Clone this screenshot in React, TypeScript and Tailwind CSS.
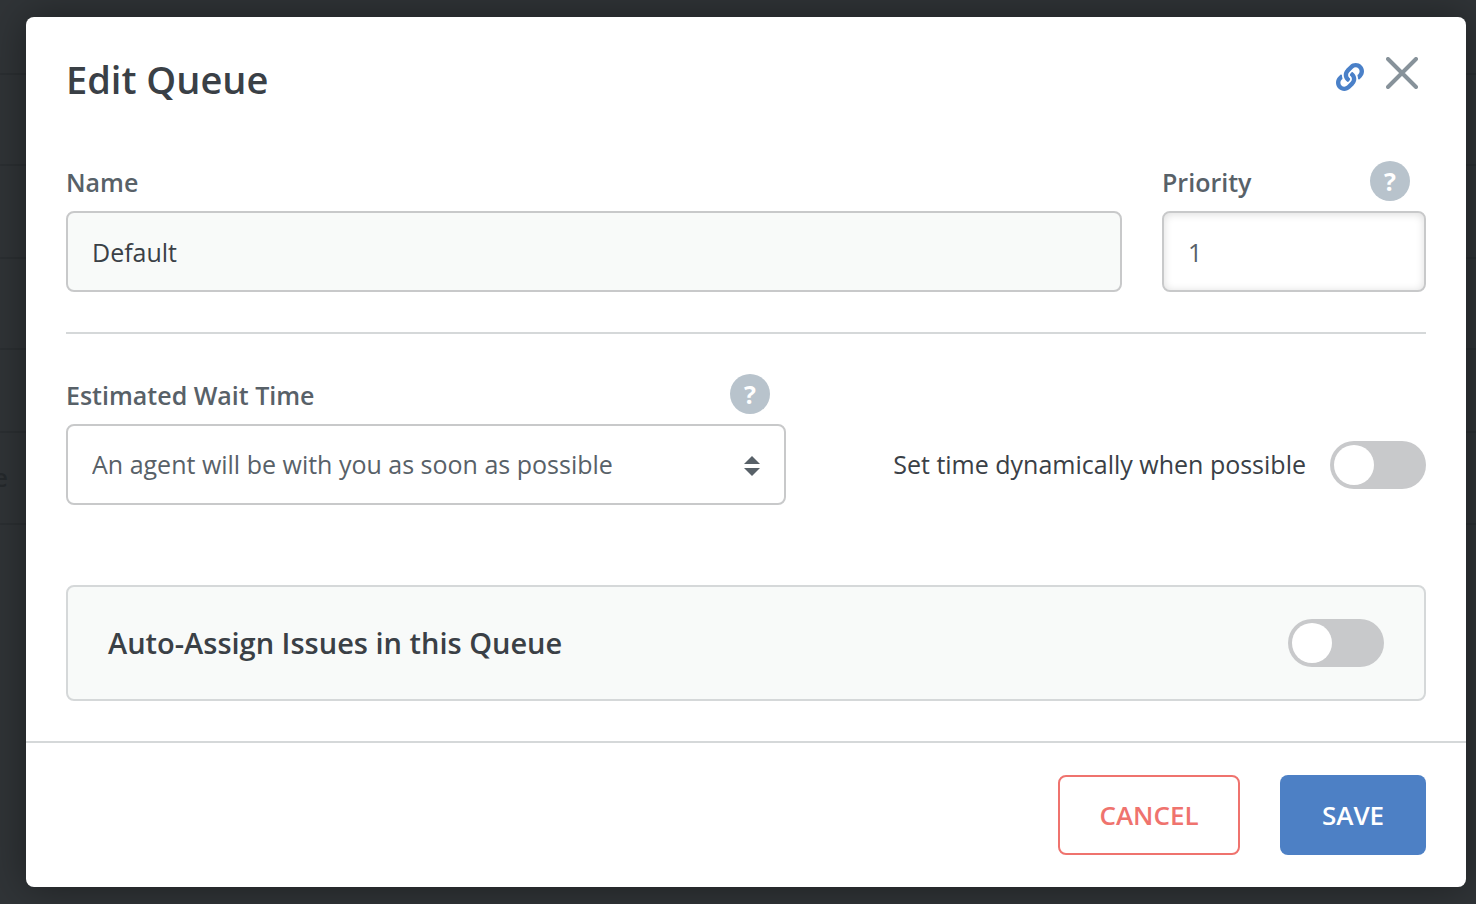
import { useState } from 'react';
import { FaLink } from 'react-icons/fa';

const labelClass = 'pt-1 font-semibold text-[#586168]';
const inputClass = 'w-full h-[81px] rounded-lg border-2 border-[#c8c9ca] px-6 text-[25px] outline-none';

function HelpButton({ label }: { label: string }) {
  return (
    <button
      type="button"
      aria-label={label}
      className="size-10 rounded-full bg-[#b8c3cc] text-white text-[25px] font-bold leading-10 text-center"
    >
      ?
    </button>
  );
}

function Toggle({ id }: { id: string }) {
  const [on, setOn] = useState(false);

  return (
    <input
      id={id}
      type="checkbox"
      checked={on}
      onChange={(e) => setOn(e.target.checked)}
      className="appearance-none shrink-0 w-24 h-12 p-1 rounded-full bg-[#c8c9cb] checked:bg-[#4d80c5] before:block before:size-10 before:rounded-full before:bg-white checked:before:ml-12"
    />
  );
}

// Dimmed queue list that shows around the modal
function Backdrop() {
  return (
    <div aria-hidden="true" className="absolute inset-0 -z-10 overflow-hidden bg-[#303437]">
      <div className="h-[75px] border-b-2 border-[#2b2f32]" />
      <div className="h-[91px] border-b-2 border-[#2b2f32]" />
      <div className="h-[93px] border-b-2 border-[#2b2f32]" />
      <div className="h-[91px] border-b-2 border-[#2b2f32]" />
      <div className="h-[83px] border-b-2 border-[#2b2f32]" />
      <div className="h-[92px] border-b-2 border-[#2b2f32] flex items-center">
        <span className="w-2 flex justify-end text-[25px] font-semibold text-[#25292c]">e</span>
      </div>
    </div>
  );
}

export default function App() {
  const [name, setName] = useState('Default');
  const [priority, setPriority] = useState('1');

  return (
    <div className="relative isolate min-h-screen pt-[17px] pb-4 pl-[26px] pr-[10px] font-['Open_Sans',sans-serif] text-[25px] text-[#3a4046]">
      <Backdrop />

      <form
        role="dialog"
        aria-labelledby="modal-title"
        onSubmit={(e) => e.preventDefault()}
        className="rounded-lg bg-white shadow-[0_0_40px_rgba(0,0,0,0.4)]"
      >
        <div className="p-10">
          <header className="flex items-center justify-between h-11">
            <h1 id="modal-title" className="text-[38px] font-semibold">Edit Queue</h1>
            <div className="flex self-start gap-[22px] pr-2">
              <a href="#queue" aria-label="Copy link" className="pt-[6px] text-[#4a80c8]">
                <FaLink className="size-7" />
              </a>
              <button type="button" aria-label="Close" className="size-8">
                <svg viewBox="0 0 32 32" className="size-8" fill="none" stroke="#87929a" strokeWidth="4" strokeLinecap="round">
                  <path d="M2 2l28 28M30 2L2 30" />
                </svg>
              </button>
            </div>
          </header>

          <div className="flex gap-10 mt-[60px] pb-10 border-b-2 border-[#d5d8d9]">
            <div className="flex-1">
              <div className="flex items-center h-10 mb-[10px]">
                <label htmlFor="name" className={labelClass}>Name</label>
              </div>
              <input
                id="name"
                value={name}
                onChange={(e) => setName(e.target.value)}
                className={`${inputClass} bg-[#f8faf9]`}
              />
            </div>
            <div className="w-[264px]">
              <div className="flex items-center justify-between h-10 mb-[10px] pr-4">
                <label htmlFor="priority" className={labelClass}>Priority</label>
                <HelpButton label="About priority" />
              </div>
              <input
                id="priority"
                value={priority}
                onChange={(e) => setPriority(e.target.value)}
                className={`${inputClass} bg-white text-[#586168] shadow-[inset_0_1px_8px_rgba(0,0,0,0.14)]`}
              />
            </div>
          </div>

          <div className="flex items-end justify-between mt-10">
            <div className="w-[720px]">
              <div className="flex items-center justify-between h-10 mb-[10px] pr-4">
                <label htmlFor="wait" className={labelClass}>Estimated Wait Time</label>
                <HelpButton label="About estimated wait time" />
              </div>
              <div className="relative">
                <select id="wait" className={`${inputClass} appearance-none bg-white text-[#586168]`}>
                  <option>An agent will be with you as soon as possible</option>
                </select>
                <svg viewBox="0 0 16 20" className="absolute right-[26px] top-8 w-4 h-5 pointer-events-none" fill="#586168">
                  <path d="M8 0l8 8H0zM0 12h16l-8 8z" />
                </svg>
              </div>
            </div>
            <div className="flex items-center gap-6 h-[81px]">
              <label htmlFor="dynamic">Set time dynamically when possible</label>
              <Toggle id="dynamic" />
            </div>
          </div>

          <div className="flex items-center justify-between h-[116px] mt-20 px-10 rounded-lg border-2 border-[#d5d8d9] bg-[#f8faf9]">
            <label htmlFor="auto-assign" className="text-[29px] font-semibold">Auto-Assign Issues in this Queue</label>
            <Toggle id="auto-assign" />
          </div>
        </div>

        <footer className="flex justify-end gap-10 px-10 py-8 border-t-2 border-[#d5d8d9] text-[26px]">
          <button type="button" className="w-[182px] h-20 rounded-lg border-2 border-[#ef736e] font-semibold text-[#ef736e]">
            CANCEL
          </button>
          <button type="submit" className="w-[146px] h-20 rounded-lg bg-[#4d80c5] font-semibold text-white">
            SAVE
          </button>
        </footer>
      </form>
    </div>
  );
}
